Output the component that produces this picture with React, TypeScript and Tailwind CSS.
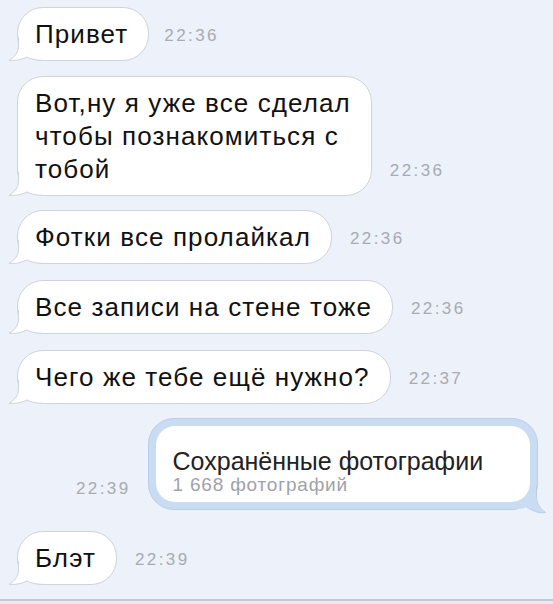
import React from "react";

const FONT = { fontFamily: '"Liberation Sans", Arial, sans-serif' };

function InTail() {
  return (
    <svg
      className="absolute pointer-events-none z-0"
      style={{ left: -10, bottom: -1 }}
      width="40"
      height="24"
      viewBox="0 0 40 24"
    >
      <path
        d="M10.5 0 L10.5 9 C10.5 15 7 20 1 23.3 C8 24 14 22.5 19 20 C24 22.6 30 23.5 40 23.5 L40 0 Z"
        fill="#ffffff"
      />
      <path
        d="M10.5 0 L10.5 9 C10.5 15 7 20 1 23.3 C8 24 14 22.5 19 20 C24 22.6 30 23.5 40 23.5"
        fill="none"
        stroke="#cfd3da"
        strokeWidth="1"
      />
    </svg>
  );
}

function Incoming({
  lines,
  time,
  timeLeft = 18,
}: {
  lines: string[];
  time: string;
  timeLeft?: number;
}) {
  return (
    <div className="flex items-end">
      <div className="relative rounded-[26px] border border-[#cfd3da] bg-white pl-[17px] pr-[20px] pt-[10px] pb-[9px]">
        <InTail />
        <div className="relative z-10 text-[26px] leading-[33px] text-[#111111] tracking-[1.1px]">
          {lines.map((l, i) => (
            <div key={i} className="whitespace-nowrap">
              {l}
            </div>
          ))}
        </div>
      </div>
      <div
        className="mb-[17px] text-[17px] leading-[17px] text-[#a7abb2] tracking-[2.4px]"
        style={{ marginLeft: timeLeft }}
      >
        {time}
      </div>
    </div>
  );
}

function Outgoing() {
  return (
    <div className="flex items-end pl-[76px]">
      <div className="mb-[13px] mr-[17px] text-[17px] leading-[17px] text-[#a7abb2] tracking-[2.4px]">
        22:39
      </div>
      <div className="relative w-[390px] h-[92px] rounded-[26px] border border-[#b9cfe9] bg-[#cadcf2] p-[7px]">
        <div className="relative z-10 h-full rounded-[19px] bg-white pl-[17px] pt-[21px]">
          <div className="text-[25px] leading-[28px] text-[#222222] tracking-[0px] whitespace-nowrap">
            Сохранённые фотографии
          </div>
          <div className="text-[19px] leading-[20px] text-[#9fa2a8] tracking-[0.8px] whitespace-nowrap">
            1 668 фотографий
          </div>
        </div>
        <svg
          className="absolute pointer-events-none"
          style={{ right: -10, bottom: -7 }}
          width="30"
          height="30"
          viewBox="0 0 30 30"
        >
          <path
            d="M0 0 L19 0 L19 10 C19 17 22 22 28 26.5 C22 27.5 15 25 10 21 C6 22.5 3 23 0 23 Z"
            fill="#cadcf2"
          />
          <path
            d="M19.5 0 L19.5 10 C19.5 17 22.5 22 28.5 26.5 C22 27.5 15 25 10 21"
            fill="none"
            stroke="#b9cfe9"
            strokeWidth="1"
          />
        </svg>
      </div>
    </div>
  );
}

export default function App() {
  return (
    <div
      className="relative w-[553px] h-[604px] overflow-hidden bg-[#edf1f9]"
      style={FONT}
    >
      <div className="flex flex-col pl-[17px] pt-[7px]">
        <Incoming lines={["Привет"]} time="22:36" timeLeft={15} />
        <div className="h-[15px]" />
        <Incoming
          lines={["Вот,ну я уже все сделал", "чтобы познакомиться с", "тобой"]}
          time="22:36"
        />
        <div className="h-[14px]" />
        <Incoming lines={["Фотки все пролайкал"]} time="22:36" />
        <div className="h-[16px]" />
        <Incoming lines={["Все записи на стене тоже"]} time="22:36" />
        <div className="h-[16px]" />
        <Incoming lines={["Чего же тебе ещё нужно?"]} time="22:37" />
        <div className="h-[14px]" />
        <div className="-ml-[17px]">
          <Outgoing />
        </div>
        <div className="h-[21px]" />
        <Incoming lines={["Блэт"]} time="22:39" />
      </div>
      <div className="absolute left-0 right-0 bottom-0 h-[5px] border-t-2 border-[#c4c9d1] bg-[#e7eaf0]" />
    </div>
  );
}
